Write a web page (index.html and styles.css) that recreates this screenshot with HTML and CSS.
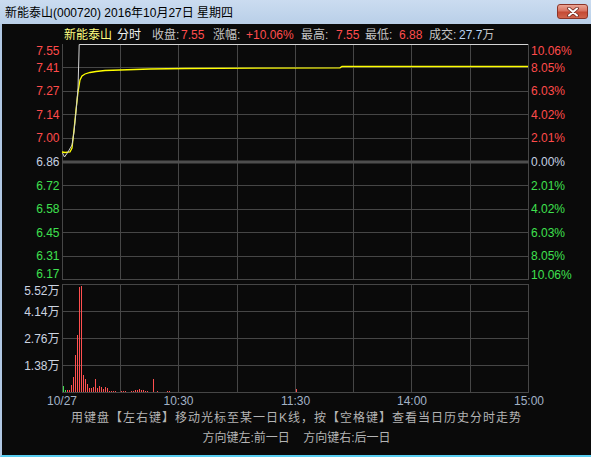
FILE: index.html
```html
<!DOCTYPE html>
<html>
<head>
<meta charset="utf-8">
<link rel="stylesheet" href="styles.css">
</head>
<body>
<div class="window">
  <div class="titlebar">
    <span class="title">新能泰山(000720) 2016年10月27日 星期四</span>
    <button class="close" aria-label="关闭">
      <svg width="14" height="10" viewBox="0 0 14 10">
        <path d="M3 1.5 L11 8.5 M11 1.5 L3 8.5" stroke="#6a2a22" stroke-width="3.6" stroke-linecap="round"/>
        <path d="M3 1.5 L11 8.5 M11 1.5 L3 8.5" stroke="#ffffff" stroke-width="2" stroke-linecap="round"/>
      </svg>
    </button>
  </div>
  <div class="main">
    <div class="quote">
      <span class="q name w53">新能泰山</span>
      <span class="q white w35">分时</span>
      <span class="q lbl w29">收盘:</span><span class="q red w32">7.55</span>
      <span class="q lbl w33">涨幅:</span><span class="q red w55">+10.06%</span>
      <span class="q lbl w35">最高:</span><span class="q red w29">7.55</span>
      <span class="q lbl w34">最低:</span><span class="q red w30">6.88</span>
      <span class="q lbl w30">成交:</span><span class="q vol"><span class="blue">27.7</span>万</span>
    </div>
    <svg class="chart" width="589" height="365" viewBox="2 43 589 365">
      <!-- price grid -->
      <g class="grid">
        <line x1="62.5" y1="44" x2="62.5" y2="280"/>
        <line x1="120.5" y1="44" x2="120.5" y2="280"/>
        <line x1="178.5" y1="44" x2="178.5" y2="280"/>
        <line x1="237.5" y1="44" x2="237.5" y2="280"/>
        <line x1="295.5" y1="44" x2="295.5" y2="280"/>
        <line x1="353.5" y1="44" x2="353.5" y2="280"/>
        <line x1="411.5" y1="44" x2="411.5" y2="280"/>
        <line x1="470.5" y1="44" x2="470.5" y2="280"/>
        <line x1="528.5" y1="44" x2="528.5" y2="280"/>
        <line x1="62" y1="67.5" x2="529" y2="67.5"/>
        <line x1="62" y1="91.5" x2="529" y2="91.5"/>
        <line x1="62" y1="114.5" x2="529" y2="114.5"/>
        <line x1="62" y1="138.5" x2="529" y2="138.5"/>
        <line x1="62" y1="185.5" x2="529" y2="185.5"/>
        <line x1="62" y1="209.5" x2="529" y2="209.5"/>
        <line x1="62" y1="232.5" x2="529" y2="232.5"/>
        <line x1="62" y1="256.5" x2="529" y2="256.5"/>
        <line x1="62" y1="279.5" x2="529" y2="279.5"/>
      </g>
      <line class="mid" x1="62" y1="162" x2="529" y2="162"/>
      <!-- volume grid -->
      <g class="grid">
        <line x1="62" y1="284.5" x2="529" y2="284.5"/>
        <line x1="62" y1="311.5" x2="529" y2="311.5"/>
        <line x1="62" y1="338.5" x2="529" y2="338.5"/>
        <line x1="62" y1="365.5" x2="529" y2="365.5"/>
        <line x1="62" y1="392.5" x2="529" y2="392.5"/>
        <line x1="62.5" y1="284" x2="62.5" y2="393"/>
        <line x1="120.5" y1="284" x2="120.5" y2="393"/>
        <line x1="178.5" y1="284" x2="178.5" y2="393"/>
        <line x1="237.5" y1="284" x2="237.5" y2="393"/>
        <line x1="295.5" y1="284" x2="295.5" y2="393"/>
        <line x1="353.5" y1="284" x2="353.5" y2="393"/>
        <line x1="411.5" y1="284" x2="411.5" y2="393"/>
        <line x1="470.5" y1="284" x2="470.5" y2="393"/>
        <line x1="528.5" y1="284" x2="528.5" y2="393"/>
      </g>
      <!-- lines -->
      <polyline class="avg" points="62,152 65,152.5 70,152 72,148 74,130 76,110 78,92 80,80 82,76 85,74 90,72.5 96,71.5 105,70.5 120,70 150,69 185,68.5 340,67.8 342,66.5 528,66.5"/>
      <polyline class="price" points="62.5,153 64.5,157 68,152 72,145 74,132 76,112 77,100 78,88 78.8,60 79.2,44.5 528,44.5"/>
      <!-- volume bars -->
      <g class="up">
        <rect x="67" y="390" width="1" height="2"/>
        <rect x="69" y="390" width="1" height="2"/>
        <rect x="71" y="385" width="1" height="7"/>
        <rect x="73" y="377" width="1" height="15"/>
        <rect x="75" y="355" width="1" height="37"/>
        <rect x="77" y="335" width="1" height="57"/>
        <rect x="79" y="287" width="1" height="105"/>
        <rect x="81" y="286" width="1" height="106"/>
        <rect x="83" y="375" width="1" height="17"/>
        <rect x="85" y="379" width="1" height="13"/>
        <rect x="87" y="384" width="1" height="8"/>
        <rect x="89" y="388" width="1" height="4"/>
        <rect x="91" y="388" width="1" height="4"/>
        <rect x="93" y="387" width="1" height="5"/>
        <rect x="95" y="379" width="1" height="13"/>
        <rect x="97" y="388" width="1" height="4"/>
        <rect x="99" y="386" width="1" height="6"/>
        <rect x="101" y="387" width="1" height="5"/>
        <rect x="103" y="389" width="1" height="3"/>
        <rect x="105" y="387" width="1" height="5"/>
        <rect x="107" y="388" width="1" height="4"/>
        <rect x="109" y="391" width="1" height="1"/>
        <rect x="111" y="391" width="1" height="1"/>
        <rect x="113" y="391" width="1" height="1"/>
        <rect x="115" y="391" width="1" height="1"/>
        <rect x="121" y="391" width="1" height="1"/>
        <rect x="123" y="391" width="1" height="1"/>
        <rect x="125" y="391" width="1" height="1"/>
        <rect x="131" y="391" width="1" height="1"/>
        <rect x="133" y="391" width="1" height="1"/>
        <rect x="135" y="390" width="1" height="2"/>
        <rect x="137" y="390" width="1" height="2"/>
        <rect x="139" y="389" width="1" height="3"/>
        <rect x="141" y="390" width="1" height="2"/>
        <rect x="143" y="390" width="1" height="2"/>
        <rect x="145" y="391" width="1" height="1"/>
        <rect x="147" y="391" width="1" height="1"/>
        <rect x="153" y="379" width="1" height="13"/>
        <rect x="157" y="391" width="1" height="1"/>
        <rect x="167" y="391" width="1" height="1"/>
        <rect x="169" y="391" width="1" height="1"/>
        <rect x="296" y="389" width="1" height="3"/>
      </g>
      <g class="down">
        <rect x="63" y="386" width="1" height="6"/>
        <rect x="65" y="390" width="1" height="2"/>
      </g>
      <!-- price labels -->
      <g class="lbl-left">
        <text class="t-red" x="59.5" y="55">7.55</text>
        <text class="t-red" x="59.5" y="71.5">7.41</text>
        <text class="t-red" x="59.5" y="95">7.27</text>
        <text class="t-red" x="59.5" y="118.5">7.14</text>
        <text class="t-red" x="59.5" y="142">7.00</text>
        <text class="t-base" x="59.5" y="166">6.86</text>
        <text class="t-green" x="59.5" y="189.5">6.72</text>
        <text class="t-green" x="59.5" y="213">6.58</text>
        <text class="t-green" x="59.5" y="236.5">6.45</text>
        <text class="t-green" x="59.5" y="260">6.31</text>
        <text class="t-green" x="59.5" y="278">6.17</text>
        <text class="t-vol" x="59.5" y="295">5.52万</text>
        <text class="t-vol" x="59.5" y="315.5">4.14万</text>
        <text class="t-vol" x="59.5" y="342.5">2.76万</text>
        <text class="t-vol" x="59.5" y="369.5">1.38万</text>
      </g>
      <g class="lbl-right">
        <text class="t-red" x="531" y="54.5">10.06%</text>
        <text class="t-red" x="531" y="71.5">8.05%</text>
        <text class="t-red" x="531" y="95">6.03%</text>
        <text class="t-red" x="531" y="118.5">4.02%</text>
        <text class="t-red" x="531" y="142">2.01%</text>
        <text class="t-base" x="531" y="166">0.00%</text>
        <text class="t-green" x="531" y="189.5">2.01%</text>
        <text class="t-green" x="531" y="213">4.02%</text>
        <text class="t-green" x="531" y="236.5">6.03%</text>
        <text class="t-green" x="531" y="260">8.05%</text>
        <text class="t-green" x="531" y="278.5">10.06%</text>
      </g>
      <g class="lbl-time">
        <text x="47" y="405" class="start">10/27</text>
        <text x="178.5" y="405">10:30</text>
        <text x="295.5" y="405">11:30</text>
        <text x="412" y="405">14:00</text>
        <text x="529" y="405">15:00</text>
      </g>
    </svg>
    <div class="hints">
      <div class="hint hint1">用键盘【左右键】移动光标至某一日K线，按【空格键】查看当日历史分时走势</div>
      <div class="hint hint2">方向键左:前一日&nbsp;&nbsp;&nbsp;&nbsp;方向键右:后一日</div>
    </div>
  </div>
</div>
</body>
</html>
```

FILE: styles.css
```css
* { box-sizing: border-box; }
html, body {
  margin: 0;
  padding: 0;
  background: #0a0a0a;
}
body {
  font-family: "Liberation Sans", "Noto Sans CJK SC", sans-serif;
  font-size: 12px;
}
.window {
  width: 591px;
  height: 457px;
  display: flex;
  flex-direction: column;
  overflow: hidden;
}
.titlebar {
  height: 24px;
  flex: none;
  display: flex;
  justify-content: space-between;
  align-items: flex-start;
  background: linear-gradient(#cbdcf0, #b9cfe8);
  padding: 0 3px 0 5px;
}
.title {
  color: #000;
  font-size: 12px;
  line-height: 16px;
  margin-top: 5px;
}
.close {
  margin-top: 4px;
  width: 31px;
  height: 15px;
  padding: 0;
  border: 1px solid #8c3428;
  border-radius: 3px;
  background: linear-gradient(#eaa595 0%, #d97462 45%, #c54a34 55%, #d0644c 100%);
  display: flex;
  align-items: center;
  justify-content: center;
}
.close svg { display: block; }
.main {
  flex: 1;
  background: #0a0a0a;
  border-left: 2px solid #b0c8e4;
  border-bottom: 2px solid #58cdf0;
  display: flex;
  flex-direction: column;
}
.quote {
  height: 19px;
  flex: none;
  padding: 3px 0 0 62px;
  display: flex;
  line-height: 16px;
  white-space: nowrap;
  color: #c0c0c0;
}
.q { display: inline-block; flex: none; }
.name { color: #ffff80; }
.white { color: #f0f0f0; }
.lbl { color: #c4c4c4; }
.red { color: #ff4d4d; }
.vol { color: #c4c4c4; }
.blue { color: #b8d2f0; }
.w29 { width: 29px; }
.w30 { width: 30px; }
.w32 { width: 32px; }
.w33 { width: 33px; }
.w34 { width: 34px; }
.w35 { width: 35px; }
.w53 { width: 53px; }
.w55 { width: 55px; }
.chart {
  display: block;
  flex: none;
  font-family: "Liberation Sans", "Noto Sans CJK SC", sans-serif;
  font-size: 12px;
}
.grid line {
  stroke: #464646;
  stroke-width: 1;
}
.mid {
  stroke: #4e4e4e;
  stroke-width: 3;
}
.avg {
  fill: none;
  stroke: #ffff00;
  stroke-width: 1.3;
}
.price {
  fill: none;
  stroke: #d4d4d4;
  stroke-width: 1;
}
.up rect { fill: #ff4f4f; }
.down rect { fill: #3fe04f; }
.lbl-left text { text-anchor: end; }
.lbl-right text { text-anchor: start; }
.t-red { fill: #ff4b4b; }
.t-green { fill: #3fe04f; }
.t-base { fill: #c4d0e0; }
.t-vol { fill: #ccd4e0; }
.lbl-time text {
  text-anchor: middle;
  fill: #a2b2c6;
}
.lbl-time text.start { text-anchor: start; }
.hints {
  flex: 1;
  color: #b4b4b4;
  text-align: center;
}
.hint {
  line-height: 20px;
  white-space: nowrap;
}
.hint1 { letter-spacing: 1px; }
```
